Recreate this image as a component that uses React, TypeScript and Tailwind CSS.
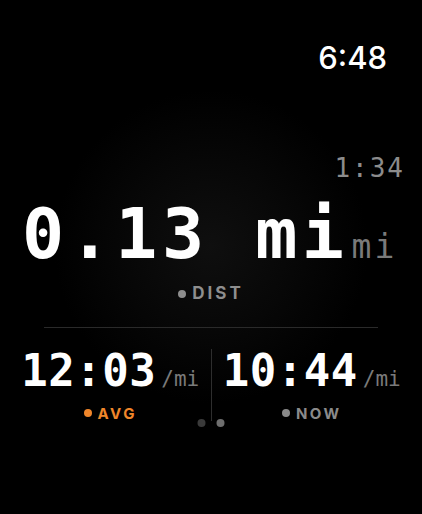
const mono = "font-['DejaVu_Sans_Mono','Liberation_Mono',monospace]";
const sans = "font-['Inter','Liberation_Sans',sans-serif]";

function Label({ text, color, dot, size }: { text: string; color: string; dot: string; size: string }) {
  return (
    <div className={`flex items-center justify-center gap-[6px] ${sans}`}>
      <span className={`size-[8px] rounded-full ${dot}`} />
      <span className={`${size} font-bold leading-none ${color}`}>{text}</span>
    </div>
  );
}

function Pace({ value, label, color, dot }: { value: string; label: string; color: string; dot: string }) {
  return (
    <div className="flex flex-1 flex-col items-center">
      <div className={`flex items-baseline ${mono}`}>
        <span className="text-[44px] font-bold leading-none tracking-[0.5px] text-white">{value}</span>
        <span className="ml-[5px] text-[21px] text-[#7a7a7a]">/mi</span>
      </div>
      <div className="mt-[10px]">
        <Label text={label} color={color} dot={dot} size="text-[15px] tracking-[2.5px]" />
      </div>
    </div>
  );
}

export default function App() {
  return (
    <div className="flex h-[514px] w-[422px] flex-col bg-black bg-[radial-gradient(circle_at_50%_48%,#0f0f0f_0%,#070707_25%,#000_46%)]">
      <div className={`flex justify-end pr-[35px] pt-[42px] ${sans}`}>
        <span className="text-[31px] font-medium leading-none text-white">6:48</span>
      </div>

      <div className={`mt-[82px] flex justify-end pr-[17px] ${mono}`}>
        <span className="text-[26px] leading-none tracking-[2px] text-[#8c8c8c]">1:34</span>
      </div>

      <div className={`mt-[18px] flex items-baseline pl-[22px] ${mono}`}>
        <span className="text-[70px] font-bold leading-none tracking-[4.5px] text-white">0.13 mi</span>
        <span className="ml-[3px] text-[33px] leading-none tracking-[3px] text-[#7a7a7a]">mi</span>
      </div>

      <div className="mt-[16px]">
        <Label text="DIST" color="text-[#8e8e8e]" dot="bg-[#8e8e8e]" size="text-[17px] tracking-[3px]" />
      </div>

      <div className="mx-[44px] mt-[25px] h-px bg-[#2a2a2a]" />

      <div className="relative mt-[21px] flex px-[10px] pb-[2px]">
        <Pace value="12:03" label="AVG" color="text-[#f0862a]" dot="bg-[#f0862a]" />
        <div className="w-px self-stretch bg-[#2e2e2e]" />
        <Pace value="10:44" label="NOW" color="text-[#8a8a8a]" dot="bg-[#8a8a8a]" />
        <div className="absolute bottom-[-4px] left-1/2 flex -translate-x-1/2 gap-[11px]">
          <span className="size-[8px] rounded-full bg-[#3a3a3a]" />
          <span className="size-[8px] rounded-full bg-[#6e6e6e]" />
        </div>
      </div>
    </div>
  );
}
